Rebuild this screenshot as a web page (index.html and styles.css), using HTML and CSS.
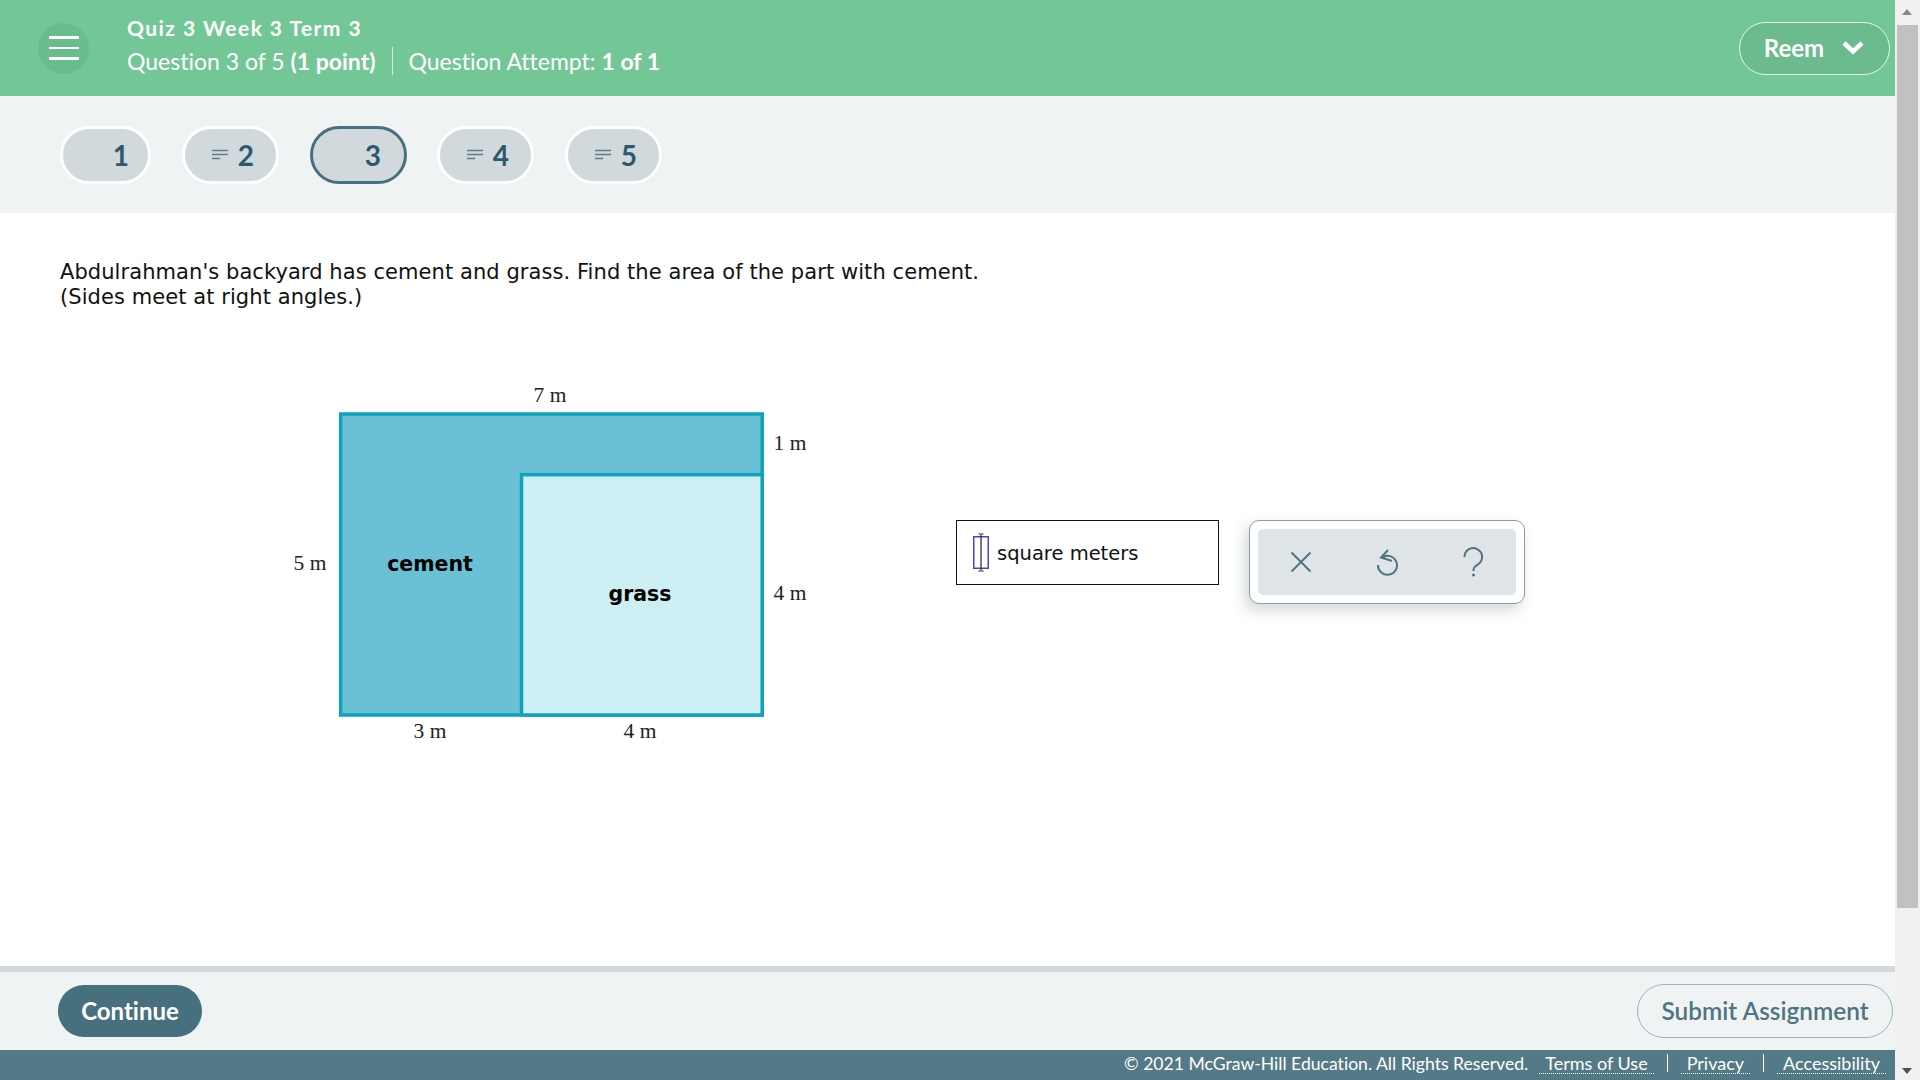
FILE: index.html
```html
<!DOCTYPE html>
<html lang="en">
<head>
<meta charset="utf-8">
<title>Quiz 3 Week 3 Term 3</title>
<link rel="stylesheet" href="styles.css">
</head>
<body>
<div class="page">
  <div class="app">
    <header class="topbar">
      <button class="menu" aria-label="Menu"><span></span><span></span><span></span></button>
      <div class="titles">
        <div class="quiz">Quiz 3 Week 3 Term 3</div>
        <div class="meta"><span>Question 3 of 5 <b>(1 point)</b></span><i class="sep"></i><span>Question Attempt: <b>1 of 1</b></span></div>
      </div>
      <button class="user">Reem
        <svg width="22" height="15" viewBox="0 0 22 15"><path d="M2 3l9 8.500 9-8.500" fill="none" stroke="#fff" stroke-width="4.500"/></svg>
      </button>
    </header>
    <nav class="qnav">
      <div class="pill">1</div>
      <div class="pill has"><svg class="lines" width="16" height="12" viewBox="0 0 16 12"><path d="M0 1.500h16M0 5.500h16M0 9.500h8" stroke="#5d7d8a" stroke-width="1.500"/></svg>2</div>
      <div class="pill current">3</div>
      <div class="pill has"><svg class="lines" width="16" height="12" viewBox="0 0 16 12"><path d="M0 1.500h16M0 5.500h16M0 9.500h8" stroke="#5d7d8a" stroke-width="1.500"/></svg>4</div>
      <div class="pill has"><svg class="lines" width="16" height="12" viewBox="0 0 16 12"><path d="M0 1.500h16M0 5.500h16M0 9.500h8" stroke="#5d7d8a" stroke-width="1.500"/></svg>5</div>
    </nav>
    <main class="content">
      <p class="prompt">Abdulrahman's backyard has cement and grass. Find the area of the part with cement.<br>(Sides meet at right angles.)</p>
      <div class="work">
        <svg class="figure" width="560" height="390" viewBox="280 370 560 390">
          <rect x="340.700" y="414" width="421.500" height="301" fill="#6ac1d6" stroke="#0fa3ba" stroke-width="3.500"/>
          <rect x="521.500" y="474.700" width="240.700" height="240.300" fill="#cdeef3" stroke="#0fa3ba" stroke-width="3.500"/>
          <g class="dim">
            <text x="550" y="402" text-anchor="middle">7 m</text>
            <text x="790" y="450" text-anchor="middle">1 m</text>
            <text x="310" y="569.500" text-anchor="middle">5 m</text>
            <text x="790" y="599.500" text-anchor="middle">4 m</text>
            <text x="430" y="737.500" text-anchor="middle">3 m</text>
            <text x="640" y="737.500" text-anchor="middle">4 m</text>
          </g>
          <g class="lab">
            <text x="430" y="570.500" text-anchor="middle">cement</text>
            <text x="640" y="600.500" text-anchor="middle">grass</text>
          </g>
        </svg>
        <div class="answer">
          <div class="field">
            <svg class="caret" width="16" height="39" viewBox="0 0 16 39"><rect x="0.750" y="3.750" width="14.500" height="31.500" fill="none" stroke="#4a44d0" stroke-width="1.500"/><path d="M8 2v35M5.500 1h5M5.500 38h5" fill="none" stroke="#222" stroke-width="1.200"/></svg>
            <span class="unit">square meters</span>
          </div>
          <div class="tools">
            <div class="toolrow">
              <svg width="24" height="24" viewBox="0 0 24 24"><path d="M2.500 2.500l19 19M21.500 2.500l-19 19" fill="none" stroke="#4f7482" stroke-width="2"/></svg>
              <svg width="24" height="30" viewBox="0 0 24 30"><path d="M7 10.500A9.500 9.500 0 1 1 3 18M13 3L6 10.500l11 3.500" fill="none" stroke="#4f7482" stroke-width="2"/></svg>
              <svg width="24" height="30" viewBox="0 0 24 30"><path d="M3.500 10A8.800 8.800 0 1 1 17.500 17C14 19.500 12.500 20 12.500 24" fill="none" stroke="#4f7482" stroke-width="2"/><circle cx="12.500" cy="28" r="1.500" fill="#4f7482"/></svg>
            </div>
          </div>
        </div>
      </div>
    </main>
    <div class="actions">
      <button class="continue">Continue</button>
      <button class="submit">Submit Assignment</button>
    </div>
    <footer class="legal">
      <span class="copy">© 2021 McGraw-Hill Education. All Rights Reserved.</span>
      <a>Terms of Use</a><i></i><a>Privacy</a><i></i><a>Accessibility</a>
    </footer>
  </div>
  <div class="scrollbar">
    <div class="arrow up"></div>
    <div class="thumb"></div>
    <div class="rest"></div>
    <div class="arrow down"></div>
  </div>
</div>
</body>
</html>
```
FILE: styles.css
```css
* { box-sizing: border-box; }
html, body { margin: 0; height: 100%; overflow: hidden; }
body { font-family: Lato, "Open Sans", sans-serif; background: #fff; font-variant-ligatures: none; }
button { font-family: inherit; font-variant-ligatures: none; padding: 0; cursor: pointer; }
.page { display: flex; width: 1920px; height: 1080px; }
.app { width: 1895px; display: flex; flex-direction: column; }

.topbar { height: 96px; flex: none; background: #73c797; display: flex; align-items: center; padding: 0 5px 0 38px; color: #fff; }
.menu { width: 51px; height: 51px; border-radius: 50%; border: 0; background: #69bd8d; display: flex; flex-direction: column; justify-content: center; gap: 8px; align-items: center; flex: none; }
.menu span { width: 30px; height: 2.500px; background: #fff; }
.titles { margin-left: 38px; flex: 1; padding-bottom: 5px; }
.quiz { font-size: 21px; font-weight: 700; letter-spacing: 1.450px; line-height: 24px; }
.meta { display: flex; align-items: center; font-size: 23px; line-height: 30px; margin-top: 6px; }
.sep { width: 1px; height: 28px; background: #cfeedd; margin: 0 16px; }
.user { width: 151px; height: 53px; border-radius: 27px; border: 1.500px solid #e6f6ec; background: #6bbb8e; color: #fff; font-size: 24px; font-weight: 700; display: flex; align-items: center; justify-content: center; gap: 18px; padding: 0 1px 2px 0; }

.qnav { height: 117px; flex: none; background: #eff3f4; display: flex; align-items: center; gap: 31px; padding: 0 0 0 60px; }
.pill { width: 91px; height: 58px; border-radius: 29px; background: #d1d9dc; border: 3px solid #fff; display: flex; align-items: center; justify-content: flex-end; gap: 10px; padding-right: 19px; font-size: 28px; font-weight: 700; color: #2c5a6c; }
.pill.has { width: 97px; padding-right: 22px; }
.pill.current { width: 97px; border-color: #47707f; border-width: 3.500px; padding-right: 23px; }
.pill.current + .pill { margin-left: -1px; }

.content { flex: 1; min-height: 0; background: #fff; padding: 47px 0 0 60px; }
.prompt { margin: 0; font-family: "DejaVu Sans", sans-serif; font-size: 21px; letter-spacing: 0.070px; line-height: 25px; color: #111; }
.work { display: flex; align-items: flex-start; padding-top: 60px; margin-left: 220px; }
.figure { flex: none; display: block; }
.dim text { font-family: "Liberation Serif", serif; font-size: 21.500px; fill: #222; }
.lab text { font-family: "DejaVu Sans", sans-serif; font-size: 20.500px; font-weight: 700; fill: #000; }
.answer { display: flex; align-items: flex-start; margin: 150px 0 0 116px; gap: 30px; }
.field { width: 263px; height: 65px; border: 1.500px solid #111; display: flex; align-items: center; padding: 0 0 0 16px; font-family: "DejaVu Sans", sans-serif; font-size: 19.500px; line-height: 24px; color: #111; gap: 8px; }
.caret { flex: none; }
.unit { padding-top: 2px; }
.tools { width: 276px; height: 84px; border: 1px solid #8a9fa8; border-radius: 10px; background: #fff; padding: 8px; box-shadow: -4px 6px 14px rgba(70, 95, 105, 0.25); }
.toolrow { height: 66px; border-radius: 5px; background: #dfe5e7; display: flex; align-items: center; justify-content: center; gap: 62px; }

.actions { height: 84px; flex: none; background: #eff3f4; border-top: 6px solid #d1d9dc; display: flex; align-items: center; justify-content: space-between; padding: 0 2px 0 58px; }
.continue { width: 144px; height: 52px; border-radius: 26px; border: 0; background: #47707f; color: #fff; font-size: 24px; font-weight: 700; padding-bottom: 2px; }
.submit { width: 256px; height: 54px; border-radius: 27px; border: 1px solid #9eb1b8; background: #eff3f4; color: #4f7482; font-size: 24.400px; font-weight: 600; padding-bottom: 2px; }

.legal { height: 30px; flex: none; background: #547a87; color: #fff; display: flex; align-items: center; justify-content: flex-end; padding: 0 9px 4px 0; font-size: 18px; }
.legal .copy { margin-right: 11px; font-size: 17.600px; }
.legal a { border-bottom: 1px dotted #fff; padding: 0 6px; line-height: 20px; }
.legal i { width: 1px; height: 18px; background: #fff; margin: 0 13px; }

.scrollbar { width: 25px; background: #f1f1f1; display: flex; flex-direction: column; padding: 0 2px; }
.arrow { height: 25px; flex: none; position: relative; }
.arrow::after { content: ""; position: absolute; left: 5px; border-left: 5.500px solid transparent; border-right: 5.500px solid transparent; }
.arrow.up::after { top: 9px; border-bottom: 6px solid #8a8a8a; }
.arrow.down::after { bottom: 6px; border-top: 6px solid #505050; }
.thumb { height: 883px; flex: none; background: #c1c1c1; }
.rest { flex: 1; }
```
